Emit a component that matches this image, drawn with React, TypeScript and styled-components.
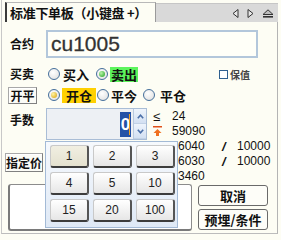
import React from 'react'
import styled, { createGlobalStyle } from 'styled-components'

const CJK = `"Noto Sans CJK SC", "DejaVu Sans", sans-serif`
const NUM = `"Liberation Sans", Arial, sans-serif`

const GlobalStyle = createGlobalStyle`
  html, body {
    margin     : 0;
    padding    : 0;
    background : #fdfdf4;
  }
  body {
    font-family : ${CJK};
  }
`

const Frame = styled.div`
  position   : relative;
  width      : 281px;
  height     : 240px;
  overflow   : hidden;
  background : #fdfdf4;
`

const TabBar = styled.div`
  display     : flex;
  box-sizing  : border-box;
  height      : 22px;
  width       : 277px;
  margin-left : 1px;
  padding-top : 2px;
  border-left : 1px solid #c8c8c8;
`

const Tab = styled.div`
  display       : flex;
  align-items   : center;
  box-sizing    : border-box;
  width         : 151px;
  margin-left   : 3px;
  padding-left  : 3px;
  background    : #fdfdf4;
  border-top    : 1px solid #b8b8b8;
  border-left   : 2px solid #3a3a3a;
  border-right  : 1px solid #9a9a9a;
  font-size     : 13px;
  font-weight   : bold;
  color         : #111;
  white-space   : nowrap;
  letter-spacing: -0.3px;
`

const TabStrip = styled.div`
  flex          : 1;
  display       : flex;
  align-items   : center;
  justify-content: flex-end;
  gap           : 8px;
  height        : 18px;
  margin-top    : 1px;
  padding-right : 4px;
  background    : #d9d9d9;
  border-top    : 1px solid #c6c6c6;
`

const Panel = styled.div`
  position      : relative;
  display       : flex;
  flex-direction: column;
  box-sizing    : border-box;
  width         : 277px;
  height        : 212px;
  margin-left   : 1px;
  border-left   : 1px solid #c8c8c8;
  border-right  : 1px solid #b4b4b4;
  border-bottom : 1px solid #bcbcbc;
`

const Row = styled.div<{ $top: number; $h: number }>`
  display     : flex;
  align-items : center;
  height      : ${p => p.$h}px;
  margin-top  : ${p => p.$top}px;
`

const FieldLabel = styled.span`
  width       : 36px;
  margin-left : 8px;
  flex-shrink : 0;
  font-size   : 12px;
  font-weight : bold;
  color       : #111;
  line-height : 14px;
`

const ContractInput = styled.div`
  display     : flex;
  align-items : center;
  box-sizing  : border-box;
  width       : 212px;
  height      : 28px;
  padding-left: 3px;
  border      : 2px solid #b3c7db;
  background  : #fffff8;
  font-family : ${NUM};
  font-size   : 21px;
  color       : #333;
  -webkit-text-stroke: 0.3px #333;
`

const RadioDot = styled.span<{ $on?: 'green' | 'gold'; $ml?: number }>`
  display        : inline-flex;
  align-items    : center;
  justify-content: center;
  flex-shrink    : 0;
  box-sizing     : border-box;
  width          : 12px;
  height         : 12px;
  margin-left    : ${p => p.$ml ?? 0}px;
  border-radius  : 50%;
  border         : 1px solid #456f9b;
  background     : radial-gradient(circle at 40% 35%, #ffffff, #dcdcdc);

  &::after {
    content       : '';
    display       : ${p => (p.$on ? 'block' : 'none')};
    width         : 6px;
    height        : 6px;
    border-radius : 50%;
    background    : ${p =>
      p.$on === 'green'
        ? 'radial-gradient(circle at 35% 35%, #b8f5a8, #1f9f1f)'
        : 'radial-gradient(circle at 35% 35%, #fff4a8, #d9a000)'};
  }
`

const OptionText = styled.span<{ $bg?: string; $pad?: number; $ml?: number }>`
  margin-left : ${p => p.$ml ?? 3}px;
  padding     : 0 ${p => p.$pad ?? 0}px;
  background  : ${p => p.$bg ?? 'transparent'};
  font-size   : 13px;
  font-weight : bold;
  line-height : 15px;
  color       : #111;
`

const Hedge = styled.label`
  display      : flex;
  align-items  : center;
  gap          : 2px;
  margin-left  : auto;
  margin-right : 27px;
  font-size    : 10px;
  font-weight  : bold;
  color        : #444;
`

const CheckBox = styled.span`
  width      : 9px;
  height     : 9px;
  box-sizing : border-box;
  border     : 1px solid #2f5f8f;
  background : #fff;
`

const SmallButton = styled.div<{ $w: number; $h: number; $ml: number }>`
  display        : flex;
  align-items    : center;
  justify-content: center;
  box-sizing     : border-box;
  width          : ${p => p.$w}px;
  height         : ${p => p.$h}px;
  margin-left    : ${p => p.$ml}px;
  border         : 1px solid #a8a8a8;
  border-right   : 1px solid #808080;
  border-bottom  : 1px solid #808080;
  box-shadow     : inset 1px 1px 0 #ffffff;
  background     : #fbfbf6;
  font-size      : 12px;
  font-weight    : bold;
  color          : #111;
`

const LowerTop = styled.div`
  display    : flex;
  height     : 76px;
  margin-top : 4px;
`

const LeftStack = styled.div`
  display        : flex;
  flex-direction : column;
  width          : 145px;
`

const QtyRow = styled.div`
  display : flex;
  height  : 32px;
`

const QtyLabel = styled(FieldLabel)`
  padding-top : 5px;
`

const QtyInput = styled.div`
  display     : flex;
  box-sizing  : border-box;
  width       : 101px;
  height      : 32px;
  border      : 1px solid #a9bdd6;
  background  : #edf0f4;
  justify-content: flex-end;
`

const Selection = styled.span`
  position    : relative;
  display     : flex;
  align-items : center;
  justify-content: center;
  width       : 11px;
  margin      : 3px 2px 2px 0;
  background  : #2552a6;
  color       : #fff;
  font-family : ${NUM};
  font-size   : 17px;
  font-weight : bold;

  &::after {
    content    : '';
    position   : absolute;
    right      : 1px;
    top        : 2px;
    bottom     : 2px;
    width      : 1px;
    background : #f0a020;
  }
`

const Spinner = styled.div`
  display        : flex;
  flex-direction : column;
  width          : 12px;
  border-left    : 1px solid #b8c9de;
`

const SpinHalf = styled.div`
  flex            : 1;
  display         : flex;
  align-items     : center;
  justify-content : center;
  background      : linear-gradient(#eef4fc, #d3e0f2);
  border-bottom   : 1px solid #c2d2e6;
`

const InfoList = styled.div`
  display        : flex;
  flex-direction : column;
  margin-left    : 3px;
  padding-top    : 0.5px;
`

const InfoRow = styled.div`
  display               : grid;
  grid-template-columns : 22px 50px 15px auto;
  align-items           : center;
  height                : 15px;
  font-family           : ${NUM};
  font-size             : 12px;
  color                 : #111;
`

const Sym = styled.span`
  display     : flex;
  align-items : center;
  padding-left: 3px;
  font-size   : 13px;
`

const Val = styled.span<{ $shift?: number }>`
  padding-left : ${p => p.$shift ?? 0}px;
`

const Slash = styled.span`
  font-size   : 13px;
  font-weight : bold;
  font-style  : italic;
`

const LowerBottom = styled.div`
  display : flex;
`

const PriceBox = styled.div`
  box-sizing    : border-box;
  width         : 184px;
  height        : 47px;
  margin-left   : 6px;
  border        : 1px solid #8c8c8c;
  border-left   : 2px solid #7a7a7a;
  border-bottom : 2px solid #7a7a7a;
  border-radius : 3px;
  background    : #ffffff;
`

const ActionCol = styled.div`
  display        : flex;
  flex-direction : column;
  gap            : 3px;
  margin-left    : 6px;
  padding-top    : 1px;
`

const ActionButton = styled.div`
  display        : flex;
  align-items    : center;
  justify-content: center;
  box-sizing     : border-box;
  width          : 70px;
  height         : 21px;
  border         : 1px solid #6a6a6a;
  border-radius  : 3px;
  background     : #fdfdf8;
  font-size      : 13px;
  font-weight    : bold;
  color          : #111;
`

const Keypad = styled.div`
  position              : absolute;
  left                  : 43px;
  top                   : 119px;
  box-sizing            : border-box;
  width                 : 133px;
  height                : 87px;
  padding               : 3px 2px 0 4px;
  display               : grid;
  grid-template-columns : repeat(3, 39px);
  grid-auto-rows        : 23px;
  gap                   : 4px;
  border                : 1px solid #a3bad6;
  background            : linear-gradient(#f6f9fd, #dfe9f6);
`

const Key = styled.div<{ $focus?: boolean }>`
  display        : flex;
  align-items    : center;
  justify-content: center;
  box-sizing     : border-box;
  border         : 1px solid #c9c9c9;
  border-right   : 2px solid #555;
  border-bottom  : 2px solid #3c3c3c;
  border-radius  : 3px;
  background     : ${p => (p.$focus ? 'linear-gradient(#f1efe2, #e4e1cf)' : 'linear-gradient(#ffffff, #e6e6e6)')};
  font-family    : ${NUM};
  font-size      : 12px;
  color          : #222;
`

const ArrowLeft = () => (
  <svg width="7" height="9" viewBox="0 0 7 9">
    <path d="M6 0.5 L1 4.5 L6 8.5 Z" fill="#e8e8e8" stroke="#333" strokeWidth="1" />
  </svg>
)

const ArrowRight = () => (
  <svg width="7" height="9" viewBox="0 0 7 9">
    <path d="M1 0.5 L6 4.5 L1 8.5 Z" fill="#e8e8e8" stroke="#333" strokeWidth="1" />
  </svg>
)

const Eject = () => (
  <svg width="12" height="9" viewBox="0 0 12 9">
    <path d="M1 5.5 L6 0.8 L11 5.5 Z" fill="#bdbdbd" stroke="#333" strokeWidth="1" />
    <rect x="1" y="7" width="10" height="1.6" fill="#333" />
  </svg>
)

const Chevron = ({ up }: { up?: boolean }) => (
  <svg width="7" height="5" viewBox="0 0 7 5">
    <path d={up ? 'M0.8 4.2 L3.5 1.2 L6.2 4.2' : 'M0.8 0.8 L3.5 3.8 L6.2 0.8'} fill="none" stroke="#4a6fa8" strokeWidth="1.6" />
  </svg>
)

const LimitUp = () => (
  <svg width="9" height="10" viewBox="0 0 9 10">
    <rect x="0" y="0" width="9" height="1.5" fill="#e0501a" />
    <path d="M4.5 3 L8.5 7 L6 7 L6 10 L3 10 L3 7 L0.5 7 Z" fill="#f07020" />
  </svg>
)

const keys: Array<string> = ['1', '2', '3', '4', '5', '10', '15', '20', '100']

export default function App() {
  return (
    <Frame>
      <GlobalStyle />
      <TabBar>
        <Tab>标准下单板（小键盘 +）</Tab>
        <TabStrip>
          <ArrowLeft />
          <ArrowRight />
          <Eject />
        </TabStrip>
      </TabBar>
      <Panel>
        <Row $top={8} $h={28}>
          <FieldLabel>合约</FieldLabel>
          <ContractInput>cu1005</ContractInput>
        </Row>
        <Row $top={7} $h={18}>
          <FieldLabel>买卖</FieldLabel>
          <RadioDot $ml={2} />
          <OptionText>买入</OptionText>
          <RadioDot $ml={7} $on="green" />
          <OptionText $ml={2} $pad={1} $bg="#5cf45c">卖出</OptionText>
          <Hedge>
            <CheckBox />
            保值
          </Hedge>
        </Row>
        <Row $top={3} $h={18}>
          <SmallButton $w={29} $h={17} $ml={6}>开平</SmallButton>
          <RadioDot $ml={11} $on="gold" />
          <OptionText $ml={2} $pad={4} $bg="#ffd000">开仓</OptionText>
          <RadioDot $ml={1} />
          <OptionText $ml={2}>平今</OptionText>
          <RadioDot $ml={6} />
          <OptionText $ml={5}>平仓</OptionText>
        </Row>
        <LowerTop>
          <LeftStack>
            <QtyRow>
              <QtyLabel>手数</QtyLabel>
              <QtyInput>
                <Selection>0</Selection>
                <Spinner>
                  <SpinHalf><Chevron up /></SpinHalf>
                  <SpinHalf><Chevron /></SpinHalf>
                </Spinner>
              </QtyInput>
            </QtyRow>
            <SmallButton $w={38} $h={19} $ml={3} style={{ marginTop: 13 }}>指定价</SmallButton>
          </LeftStack>
          <InfoList>
            <InfoRow><Sym>≤</Sym><Val>24</Val></InfoRow>
            <InfoRow><Sym><LimitUp /></Sym><Val>59090</Val></InfoRow>
            <InfoRow><Sym /><Val $shift={6}>6040</Val><Slash>/</Slash><span>10000</span></InfoRow>
            <InfoRow><Sym /><Val $shift={6}>6030</Val><Slash>/</Slash><span>10000</span></InfoRow>
            <InfoRow><Sym /><Val $shift={6}>3460</Val></InfoRow>
          </InfoList>
        </LowerTop>
        <LowerBottom>
          <PriceBox />
          <ActionCol>
            <ActionButton>取消</ActionButton>
            <ActionButton>预埋/条件</ActionButton>
          </ActionCol>
        </LowerBottom>
        <Keypad>
          {keys.map((k, i) => (
            <Key key={k} $focus={i === 0}>{k}</Key>
          ))}
        </Keypad>
      </Panel>
    </Frame>
  )
}
